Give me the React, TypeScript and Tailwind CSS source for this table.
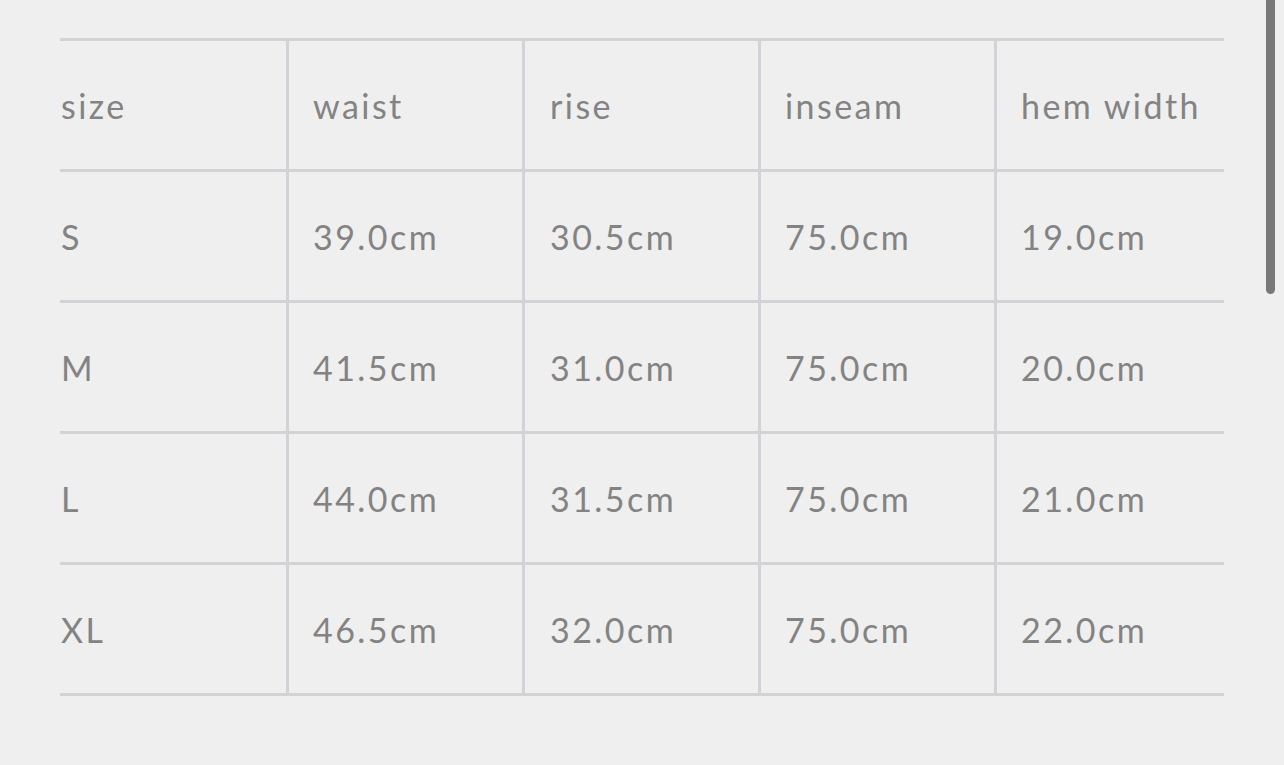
import React from 'react';

const headers = ['size', 'waist', 'rise', 'inseam', 'hem width'];

const rows = [
  ['S', '39.0cm', '30.5cm', '75.0cm', '19.0cm'],
  ['M', '41.5cm', '31.0cm', '75.0cm', '20.0cm'],
  ['L', '44.0cm', '31.5cm', '75.0cm', '21.0cm'],
  ['XL', '46.5cm', '32.0cm', '75.0cm', '22.0cm'],
];

// widths of each column, left border included
const colClass = [
  'w-[226px] pl-px',
  'w-[236px] border-l-[3px] pl-6',
  'w-[236px] border-l-[3px] pl-[25px]',
  'w-[236px] border-l-[3px] pl-6',
  'flex-1 border-l-[3px] pl-6',
];

const Row = ({ cells }: { cells: string[] }) => (
  <div className="flex h-[131px] border-b-[3px] border-[#d2d2d7]">
    {cells.map((c, i) => (
      <div key={i} className={`flex items-center border-[#d2d2d7] ${colClass[i]}`}>
        <span className="whitespace-nowrap">{c}</span>
      </div>
    ))}
  </div>
);

export default function App() {
  return (
    <div
      className="relative h-[765px] w-full overflow-hidden bg-[#efefef] text-[34px] tracking-[2.45px] text-[#838383]"
      style={{ fontFamily: 'Lato, "Open Sans", sans-serif' }}
    >
      <div className="pl-[60px] pr-[60px] pt-[38px]">
        <div className="border-t-[3px] border-[#d2d2d7]">
          <Row cells={headers} />
          {rows.map((r) => (
            <Row key={r[0]} cells={r} />
          ))}
        </div>
      </div>

      {/* scrollbar thumb */}
      <div className="absolute right-[9px] top-0 h-[294px] w-[9px] rounded-b-full bg-[#787878]" />
    </div>
  );
}
